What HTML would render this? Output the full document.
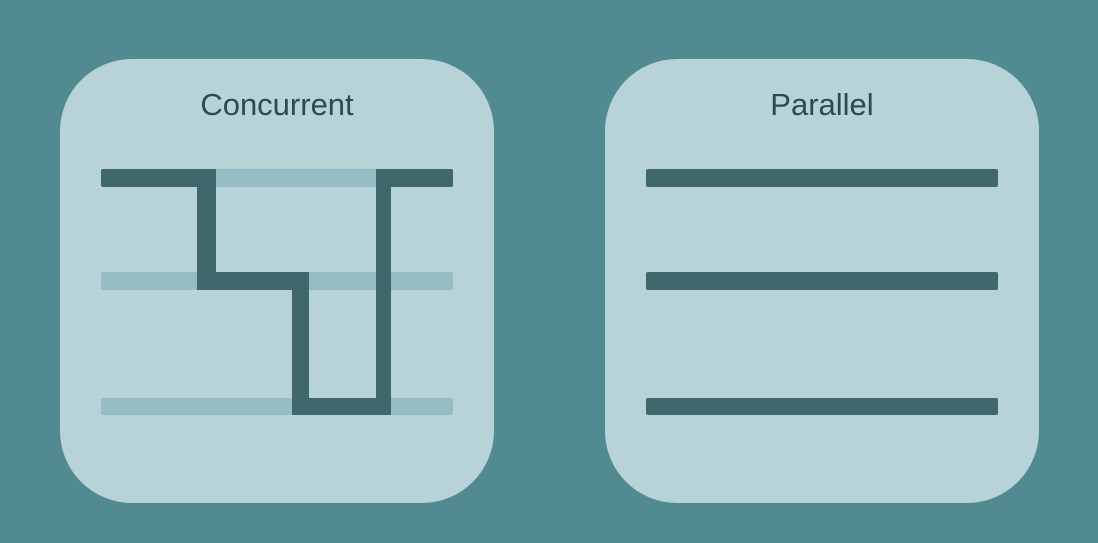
<!DOCTYPE html>
<html><head><style>
body{margin:0;width:1098px;height:543px;background:#528a92;position:relative;overflow:hidden;font-family:"Liberation Sans",sans-serif}
.card{position:absolute;top:59px;width:434px;height:444px;background:#b8d3d7;border-radius:72px}
.t{position:absolute;top:28px;width:100%;text-align:center;font-size:31px;line-height:36px;color:#2e4a4f}
.b{position:absolute;border-radius:2px}
.d{background:#3f676c}.l{background:#95bdc3}
</style></head><body>
<div class="card" style="left:60px"><div class="t">Concurrent</div></div>
<div class="card" style="left:605px"><div class="t">Parallel</div></div>
<div class="b l" style="left:101px;top:169px;width:352px;height:18px"></div>
<div class="b l" style="left:101px;top:272px;width:352px;height:18px"></div>
<div class="b l" style="left:101px;top:398px;width:352px;height:17px"></div>
<div class="b d" style="left:101px;top:169px;width:115px;height:18px"></div>
<div class="b d" style="left:376px;top:169px;width:77px;height:18px"></div>
<div class="b d" style="left:197px;top:169px;width:19px;height:121px;border-radius:0"></div>
<div class="b d" style="left:197px;top:272px;width:112px;height:18px;border-radius:0"></div>
<div class="b d" style="left:292px;top:272px;width:17px;height:143px;border-radius:0"></div>
<div class="b d" style="left:292px;top:398px;width:99px;height:17px;border-radius:0"></div>
<div class="b d" style="left:376px;top:169px;width:15px;height:246px;border-radius:0"></div>
<div class="b d" style="left:646px;top:169px;width:352px;height:18px"></div>
<div class="b d" style="left:646px;top:272px;width:352px;height:18px"></div>
<div class="b d" style="left:646px;top:398px;width:352px;height:17px"></div>
</body></html>
